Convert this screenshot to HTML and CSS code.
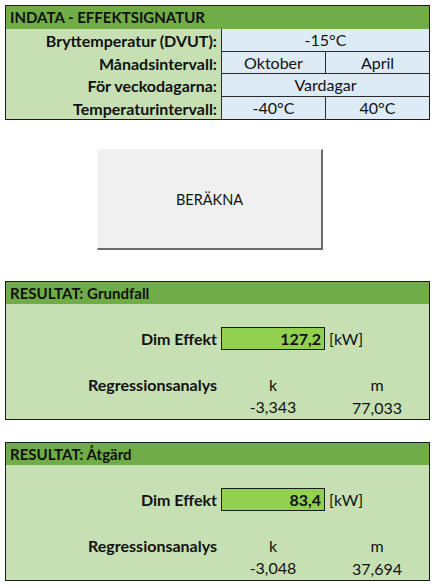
FILE: index.html
```html
<!DOCTYPE html>
<html lang="sv">

<head>
    <title>Effektsignatur</title>
    <meta charset="UTF-8">
    <link rel="stylesheet" href="styles.css">
</head>

<body>
    <section class="panel">
        <div class="head">INDATA - EFFEKTSIGNATUR</div>
        <div class="grid">
            <div class="lbl">Bryttemperatur (DVUT):</div>
            <div class="val wide">-15°C</div>
            <div class="lbl">Månadsintervall:</div>
            <div class="val">Oktober</div>
            <div class="val">April</div>
            <div class="lbl">För veckodagarna:</div>
            <div class="val wide">Vardagar</div>
            <div class="lbl">Temperaturintervall:</div>
            <div class="val">-40°C</div>
            <div class="val">40°C</div>
        </div>
    </section>

    <button class="calc">BERÄKNA</button>

    <section class="panel">
        <div class="head short">RESULTAT: Grundfall</div>
        <div class="grid res">
            <div class="blank"></div>
            <div class="lbl">Dim Effekt</div>
            <div class="dim">127,2</div>
            <div class="unit">[kW]</div>
            <div class="blank"></div>
            <div class="lbl">Regressionsanalys</div>
            <div class="num">k</div>
            <div class="num">m</div>
            <div></div>
            <div class="num">-3,343</div>
            <div class="num">77,033</div>
        </div>
    </section>

    <section class="panel last">
        <div class="head short">RESULTAT: Åtgärd</div>
        <div class="grid res">
            <div class="blank"></div>
            <div class="lbl">Dim Effekt</div>
            <div class="dim">83,4</div>
            <div class="unit">[kW]</div>
            <div class="blank"></div>
            <div class="lbl">Regressionsanalys</div>
            <div class="num">k</div>
            <div class="num">m</div>
            <div></div>
            <div class="num">-3,048</div>
            <div class="num">37,694</div>
        </div>
    </section>
</body>

</html>
```

FILE: styles.css
```css
body {
    margin: 0;
    padding-top: 5px;
    background: #ffffff;
    color: #111111;
    font-family: Lato, "Open Sans", sans-serif;
    font-size: 15px;
}

.panel {
    box-sizing: border-box;
    width: 425px;
    margin-left: 5px;
    border: 1px solid #1c1c1c;
    background: #c6e0b4;
}

.head {
    height: 23px;
    line-height: 23px;
    padding-left: 4px;
    background: #70ad47;
    font-weight: bold;
}

.head.short {
    height: 22px;
    line-height: 22px;
}

.grid {
    display: grid;
    grid-template-columns: 215px 104px 1fr;
    grid-auto-rows: 22.5px;
    font-size: 16px;
}

.lbl {
    grid-column: 1;
    text-align: right;
    padding-right: 4px;
    font-weight: bold;
    line-height: 23px;
}

.val {
    box-sizing: border-box;
    background: #ddebf7;
    border-left: 1px solid #2a2a2a;
    border-bottom: 1px solid #2a2a2a;
    text-align: center;
    line-height: 22px;
}

.grid .val:nth-last-child(-n+2) {
    border-bottom: none;
}

.wide {
    grid-column: 2 / 4;
}

/* result blocks */
.res {
    grid-auto-rows: 23px;
}

.blank {
    grid-column: 1 / 4;
}

.dim {
    box-sizing: border-box;
    background: #92d050;
    border: 1px solid #1c1c1c;
    text-align: right;
    padding-right: 3px;
    font-weight: bold;
    line-height: 21px;
}

.unit {
    padding-left: 4px;
    line-height: 23px;
}

.num {
    text-align: center;
    line-height: 23px;
}

.res .num:nth-child(9),
.res .num:nth-child(10) {
    line-height: 21px;
}

.calc {
    display: block;
    box-sizing: border-box;
    width: 226px;
    height: 101px;
    margin: 29px 0 31px 97px;
    padding: 0;
    background: #f0f0f0;
    border: 1px solid #f7f7f7;
    border-right: 2px solid #6b6b6b;
    border-bottom: 2px solid #6b6b6b;
    font-family: Lato, "Open Sans", sans-serif;
    font-size: 14.5px;
    color: #111111;
}

.last {
    margin-top: 22px;
}
```
